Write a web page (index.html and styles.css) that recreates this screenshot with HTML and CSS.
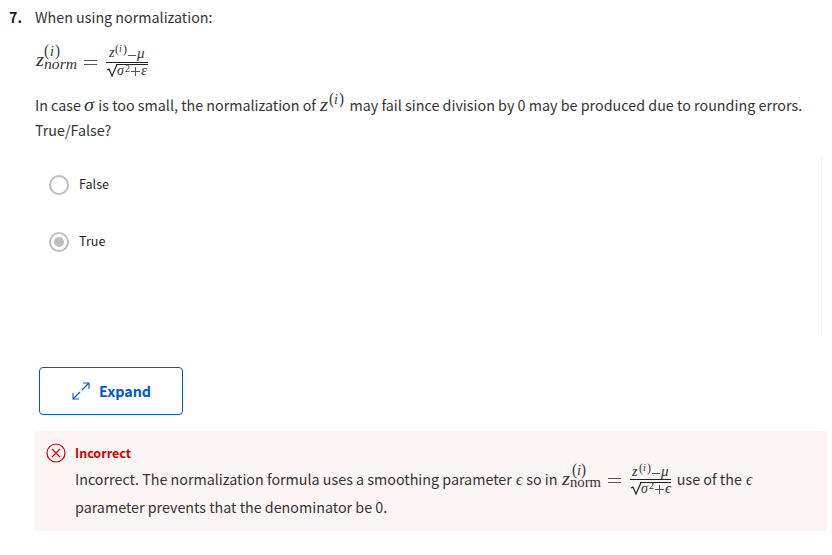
FILE: index.html
```html
<!DOCTYPE html>
<html lang="en">
<head>
<meta charset="utf-8">
<title>Quiz question</title>
<link rel="stylesheet" href="styles.css">
</head>
<body>
<main class="question">
  <div class="number">7.</div>
  <section class="content">
    <p class="intro">When using normalization:</p>
    <svg class="math formula" width="115" height="36" viewBox="0 0 115 36">
      <text x="1" y="24" font-size="19" textLength="8" lengthAdjust="spacingAndGlyphs">z</text>
      <text class="up" x="9" y="14" font-size="16" textLength="5" lengthAdjust="spacingAndGlyphs">(</text><text x="15" y="14" font-size="14">i</text><text class="up" x="20" y="14" font-size="16" textLength="5" lengthAdjust="spacingAndGlyphs">)</text>
      <text x="9" y="27" font-size="15" textLength="33" lengthAdjust="spacingAndGlyphs">norm</text>
      <path d="M49 18.5h13M49 22.5h13"/>
      <text x="74" y="15" font-size="14">z</text><text class="up" x="80" y="11" font-size="12">(</text><text x="84" y="10" font-size="10">i</text><text class="up" x="88" y="11" font-size="12">)</text>
      <path d="M93 13.5h8"/><text x="102" y="16" font-size="15">μ</text>
      <path class="rule" d="M71 20.5h42M81 22.5h32"/><path class="root" d="M72 28l2-1 3 7 5-11.5"/>
      <text x="82" y="33" font-size="14">σ</text><text class="up" x="90" y="30" font-size="10">2</text>
      <path d="M96 29.5h9M100.5 25v9"/><text x="106" y="33" font-size="15">ε</text>
    </svg>
    <p class="statement"><span class="s1">In case</span> <svg class="math sigma" width="11" height="10"><text x="0" y="10" font-size="18" textLength="10" lengthAdjust="spacingAndGlyphs">σ</text></svg> <span class="s2">is too small, the normalization of</span> <svg class="math power" width="24" height="10"><text x="0" y="10" font-size="19" textLength="8" lengthAdjust="spacingAndGlyphs">z</text><text class="up" x="9" y="3" font-size="16" textLength="5" lengthAdjust="spacingAndGlyphs">(</text><text x="14" y="3" font-size="14">i</text><text class="up" x="19" y="3" font-size="16" textLength="5" lengthAdjust="spacingAndGlyphs">)</text></svg> <span class="s3">may fail since division by 0 may be produced due to rounding errors.</span><br><span class="s4">True/False?</span></p>
    <div class="choices">
      <div class="choice"><span class="radio"></span><span class="label">False</span></div>
      <div class="choice"><span class="radio selected"></span><span class="label">True</span></div>
    </div>
    <div class="expand">
      <svg class="arrows" width="18" height="18" viewBox="0 0 18 18"><path d="M11 1h6v6M17 1L10 8M7 17H1v-6M1 17l7-7"/></svg>
      <span class="label">Expand</span>
    </div>
    <div class="feedback">
      <svg class="cross" width="20" height="20" viewBox="0 0 20 20"><circle cx="10" cy="10" r="9"/><path d="M6 6l8 8M14 6l-8 8"/></svg>
      <div>
        <h2>Incorrect</h2>
        <p class="reason"><span class="f1">Incorrect. The normalization formula uses a smoothing parameter</span> <svg class="math eps" width="7" height="10"><text x="0" y="10" font-size="16">ϵ</text></svg> <span class="f2">so in</span> <svg class="math result" width="110" height="10" viewBox="0 14 110 10">
          <text x="0" y="24" font-size="19" textLength="8" lengthAdjust="spacingAndGlyphs">z</text>
          <text class="up" x="10" y="14" font-size="16" textLength="5" lengthAdjust="spacingAndGlyphs">(</text><text x="15" y="14" font-size="14">i</text><text class="up" x="19" y="14" font-size="16" textLength="5" lengthAdjust="spacingAndGlyphs">)</text>
          <text class="up" x="8" y="26" font-size="15" textLength="31" lengthAdjust="spacingAndGlyphs">norm</text>
          <path d="M46 17.5h13M46 21.5h13"/>
          <text x="70" y="15" font-size="14">z</text><text class="up" x="77" y="11" font-size="12">(</text><text x="81" y="10" font-size="10">i</text><text class="up" x="85" y="11" font-size="12">)</text>
          <path d="M90 12.5h8"/><text x="99" y="15" font-size="15">μ</text>
          <path class="rule" d="M68 18.5h41M78 21.5h31"/><path class="root" d="M69 27l2-1 3 7 5-11.5"/>
          <text x="79" y="32" font-size="14">σ</text><text class="up" x="87" y="28" font-size="10">2</text>
          <path d="M93 28.5h9M97.5 24v9"/><text x="103" y="32" font-size="15">ϵ</text>
        </svg> <span class="f3">use of the</span> <svg class="math eps" width="8" height="10"><text x="0" y="10" font-size="16">ϵ</text></svg><br><span class="f4">parameter prevents that the denominator be 0.</span></p>
      </div>
    </div>
  </section>
</main>
</body>
</html>
```
FILE: styles.css
```css
* { box-sizing: border-box; }
body {
  margin: 0;
  background: #fff;
  color: #333;
  font-family: "Noto Sans CJK SC", "Noto Sans", sans-serif;
  font-size: 14.3px;
}
p, h2 { margin: 0; }
.question { display: flex; padding: 4px 5px 0 9px; }
.number { width: 26px; flex: none; font-weight: 700; line-height: 25px; color: #1f1f1f; }
.content { width: 792px; flex: none; }
.intro { line-height: 25px; }
.math { overflow: visible; fill: #333; font-family: "Liberation Serif", serif; font-style: italic; }
.math .up { font-style: normal; }
.math path { stroke: #555; stroke-width: 1; fill: none; }
.math .rule { stroke: #222; }
.math .root { stroke: #222; stroke-width: 1.2; }
.formula { display: block; margin-top: 13px; }
.statement { margin-top: 14px; line-height: 25px; white-space: nowrap; }
.power { margin: 0 2px 0 1px; }
.s3 { letter-spacing: 0.015px; }
.choices {
  width: 787px;
  height: 181px;
  margin-top: 13px;
  border-right: 1px solid #f2f2f2;
  padding: 20px 0 0 14px;
}
.choice { display: flex; align-items: center; height: 20px; margin-bottom: 37px; font-size: 12.6px; color: #1f1f1f; }
.label { margin-bottom: 3px; }
.radio { width: 20px; height: 20px; margin-right: 10px; border: 2px solid #bdbdbd; border-radius: 50%; }
.selected { padding: 3px; }
.selected::before { content: ""; display: block; width: 10px; height: 10px; border-radius: 50%; background: #bdbdbd; }
.expand {
  display: flex;
  align-items: center;
  width: 144px;
  height: 48px;
  margin: 31px 0 0 4px;
  padding-left: 32px;
  border: 1px solid #0056d2;
  border-radius: 4px;
  color: #0056d2;
  font-weight: 700;
}
.expand .label { margin-bottom: 2px; }
.arrows { margin-right: 9px; fill: none; stroke: #0056d2; stroke-width: 1.1; }
.feedback {
  display: flex;
  height: 100px;
  margin: 16px 0 0 -1px;
  padding: 12px 0 0 12px;
  background: #fdf5f5;
}
.cross { flex: none; margin-right: 9px; fill: none; stroke: #d30001; stroke-width: 1.2; }
h2 { color: #d30001; font-size: 12.5px; line-height: 20px; font-weight: 700; }
.reason { margin-top: 2px; line-height: 28px; white-space: nowrap; }
.result { margin: 0 2px 0 1px; }
.eps { margin-left: 1px; }
```
